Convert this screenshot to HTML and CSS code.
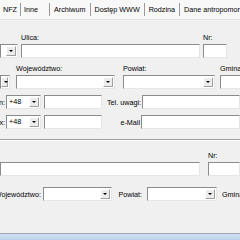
FILE: index.html
```html
<!DOCTYPE html>
<html>
<head>
<title>Dane pacjenta</title>
<meta name="viewport" content="width=device-width, initial-scale=1.0">
<link rel="stylesheet" href="styles.css">
</head>
<body>

<div class="window">
  <div class="tabs">
    <span class="tab tab-nfz">NFZ</span>
    <span class="tab tab-inne">Inne</span>
    <span class="tab">Archiwum</span>
    <span class="tab">Dostęp WWW</span>
    <span class="tab">Rodzina</span>
    <span class="tab tab-last">Dane antropomorficzne</span>
  </div>

  <!-- adres zamieszkania -->
  <div class="group">
    <div class="row row-a">
      <div class="col w-18"><span class="lbl"></span><div class="box combo"><span class="arrow"></span></div></div>
      <div class="col w-179"><span class="lbl">Ulica:</span><div class="box"></div></div>
      <div class="col w-24"><span class="lbl">Nr:</span><div class="box"></div></div>
    </div>

    <div class="row row-b">
      <div class="col w-10"><span class="lbl"></span><div class="box combo"><span class="arrow"></span></div></div>
      <div class="col w-99 ml-6"><span class="lbl">Województwo:</span><div class="box combo"><span class="arrow"></span></div></div>
      <div class="col w-92 ml-8"><span class="lbl">Powiat:</span><div class="box combo"><span class="arrow"></span></div></div>
      <div class="col w-30 ml-5"><span class="lbl">Gmina</span><div class="box"></div></div>
    </div>

    <div class="row row-c">
      <span class="side-lbl w-6">n:</span>
      <div class="box combo w-35"><span class="val">+48</span><span class="arrow"></span></div>
      <div class="box w-58 ml-3"></div>
      <span class="side-lbl w-40">Tel. uwagi:</span>
      <div class="box grow"></div>
    </div>

    <div class="row row-c">
      <span class="side-lbl w-6">x:</span>
      <div class="box combo w-35"><span class="val">+48</span><span class="arrow"></span></div>
      <div class="box w-58 ml-3"></div>
      <span class="side-lbl w-39">e-Mail</span>
      <div class="box grow"></div>
    </div>
  </div>

  <div class="etched"></div>

  <!-- adres korespondencyjny -->
  <div class="group group-2">
    <div class="row row-a">
      <div class="col w-200"><span class="lbl"></span><div class="box"></div></div>
      <div class="col w-32 ml-5"><span class="lbl">Nr:</span><div class="box"></div></div>
    </div>

    <div class="row row-e">
      <span class="side-lbl w-42">Województwo:</span>
      <div class="box combo w-69 ml-1"><span class="arrow"></span></div>
      <span class="side-lbl w-31">Powiat:</span>
      <div class="box combo w-70 ml-4"><span class="arrow"></span></div>
      <span class="plain-lbl ml-5">Gmina</span>
    </div>
  </div>

  <div class="filler"></div>
  <div class="statusbar"></div>
</div>

</body>
</html>
```

FILE: styles.css
```css
/* --- okno formularza --- */
body {
  margin: 0;
  padding: 0;
  font-family: 'Liberation Sans', Arial, sans-serif;
  font-size: 7.2px;
  color: #000;
  background-color: #f0f0f0;
}

.window {
  width: 240px;
  height: 240px;
  overflow: hidden;
  display: flex;
  flex-direction: column;
}

/* zakladki */
.tabs {
  height: 20px;
  flex: none;
  display: flex;
  background-color: #f8f8f8;
  border-bottom: 1px solid #e2e2e2;
  box-sizing: border-box;
  white-space: nowrap;
}

.tab {
  padding: 2px 4px 0 4px;
  border-right: 1px solid #9a9a9a;
  height: 11px;
  margin-top: 3px;
  line-height: 9px;
}
.tab-nfz { padding-left: 3px; padding-right: 3px; }
.tab-inne { padding-left: 3px; padding-right: 11px; }
.tab-last { border-right: none; }

/* grupy pol */
.group {
  flex: none;
}

.row {
  display: flex;
  align-items: flex-end;
  white-space: nowrap;
}
.row-a { margin-top: 13px; }
.row-b { margin-top: 6px; }
.row-c { margin-top: 6px; align-items: center; }
.row-e { margin-top: 11px; align-items: center; }

.col {
  display: flex;
  flex-direction: column;
  flex: none;
  margin-right: 3px;
}
.row-b .col { margin-right: 0; }

.lbl {
  height: 10px;
  line-height: 9px;
  margin-bottom: 1px;
}

.side-lbl {
  flex: none;
  display: flex;
  justify-content: flex-end;
  overflow: hidden;
  padding-right: 1px;
  box-sizing: border-box;
}
.plain-lbl {
  flex: none;
}

.box {
  height: 14px;
  background-color: #fff;
  border: 1px solid;
  border-color: #8b8b8b #e6e6e6 #e6e6e6 #8b8b8b;
  box-sizing: border-box;
  flex: none;
}
.box.grow { flex: 1; }

.combo {
  display: flex;
  justify-content: space-between;
  align-items: center;
}

.val {
  padding-left: 2px;
  line-height: 10px;
}

.arrow {
  margin-left: auto;
  width: 10px;
  height: 10px;
  margin-right: 1px;
  background-color: #ececec;
  border: 1px solid;
  border-color: #fff #a0a0a0 #a0a0a0 #fff;
  box-sizing: border-box;
  position: relative;
}
.arrow::after {
  content: "";
  position: absolute;
  left: 2px;
  top: 3px;
  border-left: 2px solid transparent;
  border-right: 2px solid transparent;
  border-top: 2px solid #000;
}

/* linia oddzielajaca */
.etched {
  margin-top: 10px;
  height: 1px;
  background-color: #a0a0a0;
  border-bottom: 1px solid #fff;
  flex: none;
}

.group-2 .row-a { margin-top: 10px; }

.filler { flex: 1; }

.statusbar {
  height: 6px;
  flex: none;
  border-top: 1px solid #9aa6b4;
  background: linear-gradient(#cfe0f2, #bcd2ea);
}

/* szerokosci */
.w-6 { width: 6px; }
.w-10 { width: 10px; }
.w-18 { width: 18px; }
.w-24 { width: 24px; }
.w-30 { width: 30px; }
.w-31 { width: 31px; }
.w-32 { width: 32px; }
.w-35 { width: 35px; }
.w-39 { width: 39px; }
.w-40 { width: 40px; }
.w-42 { width: 42px; }
.w-58 { width: 58px; }
.w-69 { width: 69px; }
.w-70 { width: 70px; }
.w-92 { width: 92px; }
.w-99 { width: 99px; }
.w-179 { width: 179px; }
.w-200 { width: 200px; }

.ml-1 { margin-left: 1px; }
.ml-3 { margin-left: 3px; }
.ml-4 { margin-left: 4px; }
.ml-5 { margin-left: 5px; }
.ml-6 { margin-left: 6px; }
.ml-8 { margin-left: 8px; }
```
